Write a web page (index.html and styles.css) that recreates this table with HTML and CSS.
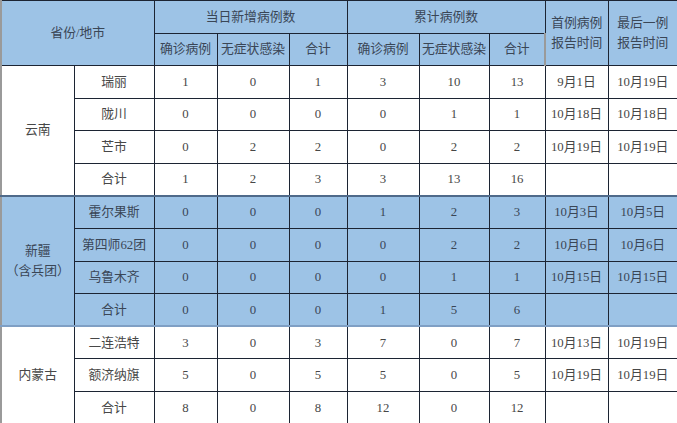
FILE: index.html
```html
<!DOCTYPE html>
<html lang="zh">
<head>
<meta charset="utf-8">
<link rel="stylesheet" href="styles.css">
</head>
<body>
<table class="sheet">
  <colgroup>
    <col class="c1"><col class="c2"><col class="c3"><col class="c4"><col class="c5">
    <col class="c6"><col class="c7"><col class="c8"><col class="c9"><col class="c10">
  </colgroup>
  <thead>
    <tr class="hrow">
      <th colspan="2" rowspan="2">省份/地市</th>
      <th colspan="3">当日新增病例数</th>
      <th colspan="3">累计病例数</th>
      <th rowspan="2">首例病例<br>报告时间</th>
      <th rowspan="2">最后一例<br>报告时间</th>
    </tr>
    <tr class="hrow">
      <th>确诊病例</th><th>无症状感染</th><th>合计</th>
      <th>确诊病例</th><th>无症状感染</th><th>合计</th>
    </tr>
  </thead>
  <tbody class="white">
    <tr><td rowspan="4">云南</td><td>瑞丽</td><td>1</td><td>0</td><td>1</td><td>3</td><td>10</td><td>13</td><td>9月1日</td><td>10月19日</td></tr>
    <tr><td>陇川</td><td>0</td><td>0</td><td>0</td><td>0</td><td>1</td><td>1</td><td>10月18日</td><td>10月18日</td></tr>
    <tr><td>芒市</td><td>0</td><td>2</td><td>2</td><td>0</td><td>2</td><td>2</td><td>10月19日</td><td>10月19日</td></tr>
    <tr><td>合计</td><td>1</td><td>2</td><td>3</td><td>3</td><td>13</td><td>16</td><td></td><td></td></tr>
  </tbody>
  <tbody class="blue">
    <tr><td rowspan="4">新疆<br>（含兵团）</td><td>霍尔果斯</td><td>0</td><td>0</td><td>0</td><td>1</td><td>2</td><td>3</td><td>10月3日</td><td>10月5日</td></tr>
    <tr><td>第四师62团</td><td>0</td><td>0</td><td>0</td><td>0</td><td>2</td><td>2</td><td>10月6日</td><td>10月6日</td></tr>
    <tr><td>乌鲁木齐</td><td>0</td><td>0</td><td>0</td><td>0</td><td>1</td><td>1</td><td>10月15日</td><td>10月15日</td></tr>
    <tr><td>合计</td><td>0</td><td>0</td><td>0</td><td>1</td><td>5</td><td>6</td><td></td><td></td></tr>
  </tbody>
  <tbody class="white">
    <tr><td rowspan="3">内蒙古</td><td>二连浩特</td><td>3</td><td>0</td><td>3</td><td>7</td><td>0</td><td>7</td><td>10月13日</td><td>10月19日</td></tr>
    <tr><td>额济纳旗</td><td>5</td><td>0</td><td>5</td><td>5</td><td>0</td><td>5</td><td>10月19日</td><td>10月19日</td></tr>
    <tr><td>合计</td><td>8</td><td>0</td><td>8</td><td>12</td><td>0</td><td>12</td><td></td><td></td></tr>
  </tbody>
</table>
</body>
</html>
```
FILE: styles.css
```css
html, body {
  margin: 0;
  padding: 0;
  background: #ffffff;
  overflow: hidden;
}
.sheet {
  border-collapse: collapse;
  table-layout: fixed;
  width: 677px;
  font-family: "Liberation Serif", "Noto Sans CJK SC", serif;
  font-size: 12.8px;
  color: #474747;
  border-left: 2px solid #9a9a9a;
  border-top: 1px solid #1c2433;
}
.c1 { width: 73px; }
.c2 { width: 80px; }
.c3 { width: 63px; }
.c4 { width: 72px; }
.c5 { width: 58px; }
.c6 { width: 72px; }
.c7 { width: 70px; }
.c8 { width: 56px; }
.c9 { width: 63px; }
.c10 { width: 70px; }
.sheet th, .sheet td {
  border: 1px solid #1c2433;
  text-align: center;
  vertical-align: middle;
  padding: 0;
  font-weight: normal;
  line-height: 20px;
  white-space: nowrap;
}
.hrow { height: 32.5px; }
.sheet thead th {
  background: #9dc3e6;
  color: #3a4656;
}
.sheet tbody tr { height: 32.6px; }
.blue td {
  background: #9dc3e6;
  color: #3a4656;
}
.blue tr:first-child td { border-top: 2px solid #4f6a8a; }
.blue + .white tr:first-child td { border-top: 2px solid #7f9fc4; }
.sheet td:last-child, .sheet th:last-child { border-right: 2px solid #9a9a9a; }
```
